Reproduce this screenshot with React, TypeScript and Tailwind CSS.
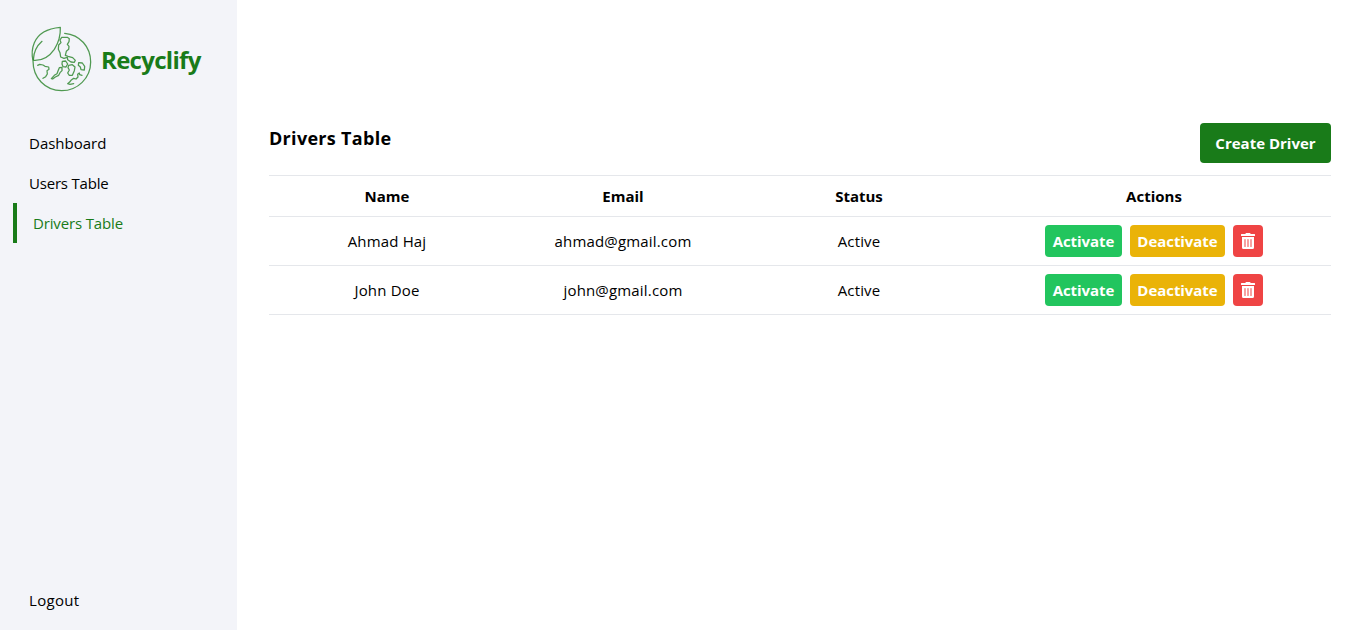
import { FaTrashAlt } from "react-icons/fa";

const navItems = [
  { label: "Dashboard", active: false, tracking: "tracking-normal" },
  { label: "Users Table", active: false, tracking: "tracking-[-0.2px]" },
  { label: "Drivers Table", active: true, tracking: "tracking-[-0.15px]" },
];

const drivers = [
  { name: "Ahmad Haj", email: "ahmad@gmail.com", status: "Active" },
  { name: "John Doe", email: "john@gmail.com", status: "Active" },
];

function Logo() {
  return (
    <svg
      className="h-[68px] w-16 shrink-0"
      viewBox="31 30 192 204"
      fill="none"
      stroke="#197b19"
      strokeOpacity="0.75"
      strokeWidth="3.8"
      strokeLinecap="round"
      strokeLinejoin="round"
    >
      <path d="M135 55C181 59 213 96 213 141C213 189 174 227 126 227C76 227 40 188 40 137C36 120 36 102 44 83C56 55 87 40 122 37C123 62 117 83 104 103C88 126 68 138 41 136" />
      <path d="M41 134C42 112 50 94 67 79" />
      <path d="M126 67L143 67L149 71L148 80L143 88L148 94L147 103L140 109L137 121L145 124L159 128L167 136L164 142L154 141L144 134L143 127L133 130L123 126L121 113L116 103L117 90L124 83L121 75Z" />
      <path d="M128 139L138 138L144 147L139 156L130 155L127 147Z" />
      <path d="M147 151L158 149L166 156L164 167L158 181L149 181L144 174L149 165L145 158Z" />
      <path d="M177 143L188 144L195 154L194 165L184 164L182 156L176 151Z" />
      <path d="M54 151L60 148L70 150L76 154L87 156L88 163L82 167L83 177L78 185L70 190" />
      <path d="M119 158L127 157L127 167L121 173L117 181L107 186L99 192L95 191L104 181L112 176L115 168Z" />
      <path d="M187 181L180 179L179 174L174 178L175 186L169 192L162 190L154 196L150 201L144 206L151 208L162 206" />
    </svg>
  );
}

function Sidebar() {
  return (
    <aside className="flex w-[237px] shrink-0 flex-col bg-[#f3f4f9] pb-2.5">
      <div className="flex h-[123px] items-start pl-[30px] pt-[25px]">
        <Logo />
        <h1 className="ml-[7px] mt-[17px] text-2xl leading-9 font-bold tracking-[-0.7px] text-[#197b19]">
          Recyclify
        </h1>
      </div>
      <nav className="flex flex-col pl-[13px]">
        {navItems.map((item) => (
          <a
            key={item.label}
            className={`flex h-10 items-center px-4 ${item.tracking} ${
              item.active ? "border-l-4 border-[#197b19] text-[#197b19]" : ""
            }`}
          >
            {item.label}
          </a>
        ))}
      </nav>
      <button className="mt-auto flex h-10 items-center pl-[29px] tracking-[0.3px]">Logout</button>
    </aside>
  );
}

export default function App() {
  return (
    <div className="flex h-[630px] w-full overflow-hidden bg-white font-['Open_Sans','Noto_Sans',sans-serif] text-[15px] leading-6 text-black">
      <Sidebar />
      <main className="flex-1 px-8 pt-[123px]">
        <div className="flex h-[52px] items-start justify-between">
          <h2 className="text-lg leading-[30px] font-bold tracking-[0.3px]">Drivers Table</h2>
          <button className="h-10 w-[131px] rounded bg-[#197b19] font-bold text-white">
            Create Driver
          </button>
        </div>
        <table className="w-full table-fixed border-collapse text-center">
          <colgroup>
            <col className="w-[236px]" />
            <col className="w-[236px]" />
            <col className="w-[236px]" />
            <col className="w-[354px]" />
          </colgroup>
          <thead>
            <tr className="h-[41px] border-y border-[#e5e7eb]">
              <th className="p-0 font-bold">Name</th>
              <th className="p-0 font-bold">Email</th>
              <th className="p-0 font-bold">Status</th>
              <th className="p-0 font-bold">Actions</th>
            </tr>
          </thead>
          <tbody>
            {drivers.map((driver) => (
              <tr key={driver.email} className="h-[49px] border-b border-[#e5e7eb] tracking-[0.17px]">
                <td>{driver.name}</td>
                <td>{driver.email}</td>
                <td>{driver.status}</td>
                <td>
                  <div className="flex justify-center gap-2 font-bold tracking-[-0.05px] text-white">
                    <button className="h-8 w-[77px] rounded bg-[#22c55e]">Activate</button>
                    <button className="h-8 w-[95px] rounded bg-[#eab308]">Deactivate</button>
                    <button className="flex h-8 w-[30px] items-center justify-center rounded bg-[#ef4444]">
                      <FaTrashAlt className="h-4 w-3.5" />
                    </button>
                  </div>
                </td>
              </tr>
            ))}
          </tbody>
        </table>
      </main>
    </div>
  );
}
